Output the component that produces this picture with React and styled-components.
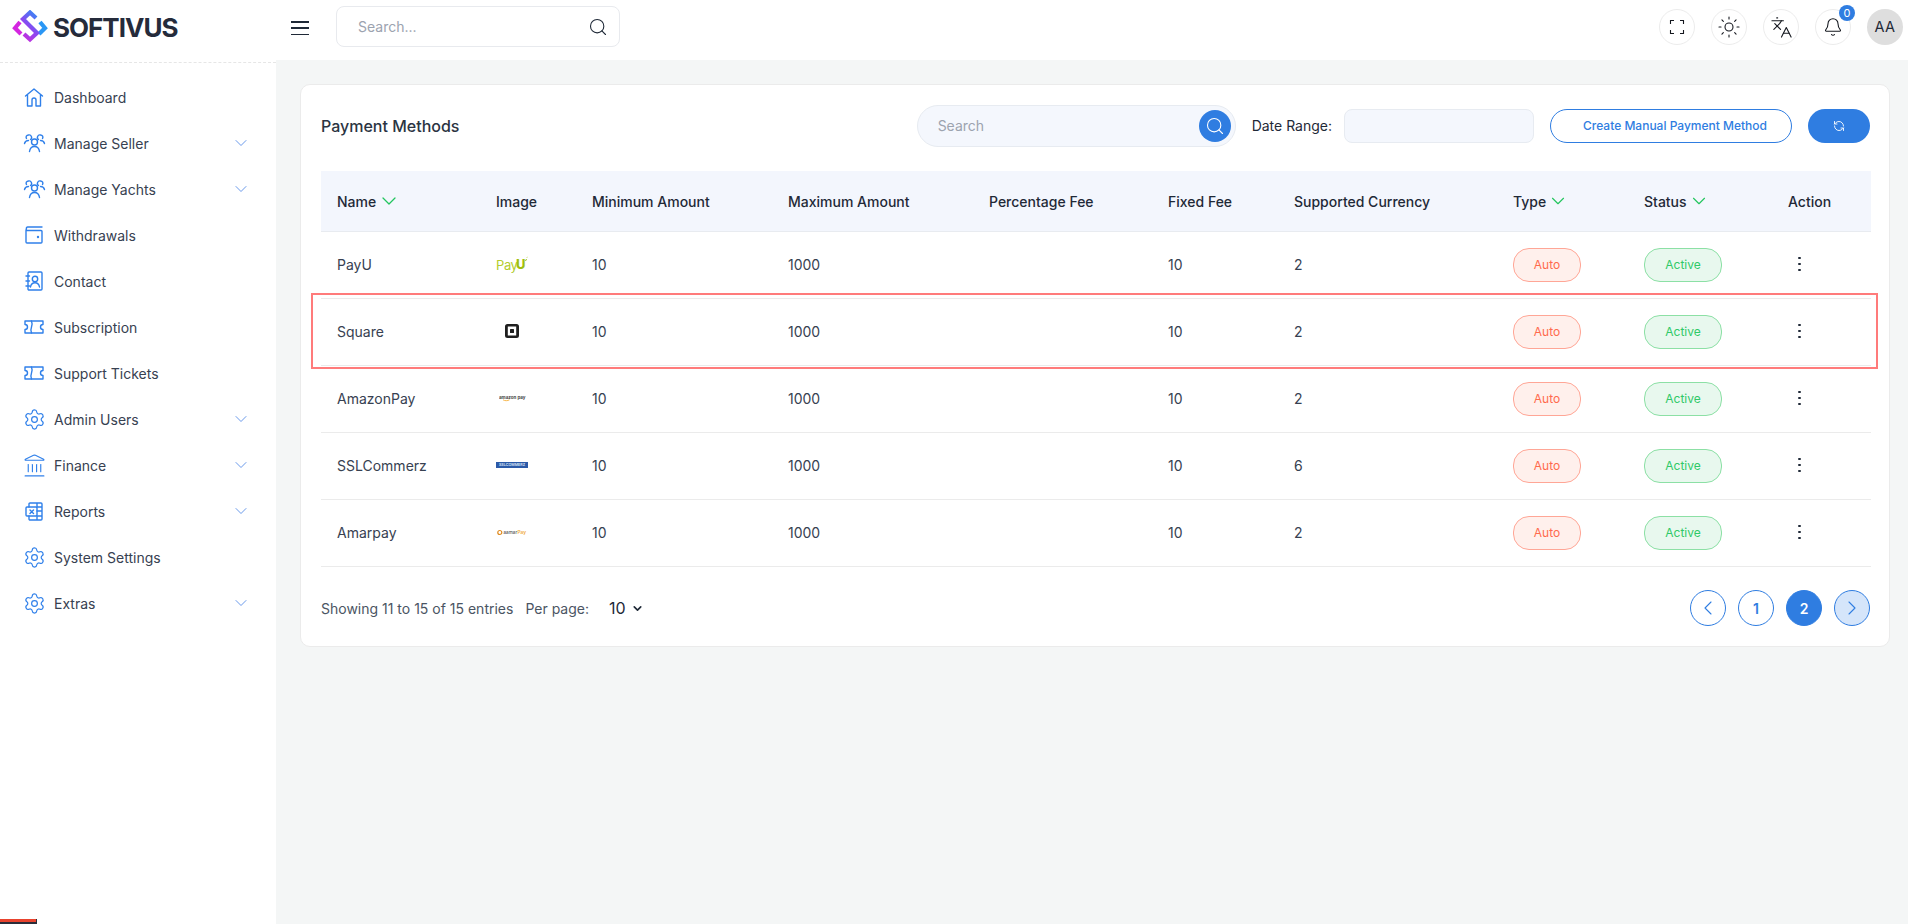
import React from "react";
import styled, { createGlobalStyle } from "styled-components";
import {
  ChevronDown, ChevronLeft, ChevronRight, Search, Settings, Landmark, Sun, Languages, Bell, RefreshCcw,
} from "lucide-react";

const Global = createGlobalStyle`
  html, body { margin: 0; padding: 0; height: 100%; overflow: hidden; }
  body { font-family: Inter, "Liberation Sans", sans-serif; background: #f4f6f6; color: #1f2937; }
  * { box-sizing: border-box; }
`;

const Shell = styled.div`
  display: flex;
  width: 1908px;
  height: 924px;
  position: relative;
`;

const Sidebar = styled.aside`
  width: 276px;
  flex: none;
  background: #fff;
`;

const Brand = styled.div`
  height: 63px;
  padding: 10px 0 0 12px;
  display: flex;
  align-items: flex-start;
  gap: 5px;
  border-bottom: 1px dashed #e6e6e6;
`;

const BrandName = styled.span`
  font-size: 26px;
  line-height: 36px;
  font-weight: 700;
  letter-spacing: -1px;
  color: #252b3b;
`;

const Nav = styled.nav`
  padding-top: 11px;
  display: flex;
  flex-direction: column;
`;

const NavItem = styled.div`
  height: 46px;
  padding: 0 25px 0 24px;
  display: flex;
  align-items: center;
  font-size: 14px;
  color: #374151;
`;

const NavIcon = styled.span`
  width: 20px;
  height: 20px;
  margin-right: 10px;
  display: flex;
  align-items: center;
  justify-content: center;
  color: #3080ea;
  svg { flex: none; }
`;

const NavLabel = styled.span`
  flex: 1;
`;

const NavCaret = styled(ChevronDown)`
  color: #5b8fe8;
`;

const Main = styled.div`
  flex: 1;
  min-width: 0;
  display: flex;
  flex-direction: column;
`;

const Topbar = styled.header`
  height: 60px;
  background: #fff;
  display: flex;
  align-items: center;
  padding: 0 5px 0 15px;
`;

const Burger = styled.button`
  width: 18px;
  height: 14px;
  padding: 0;
  border: 0;
  background: none;
  display: flex;
  flex-direction: column;
  justify-content: space-between;
  margin: -4px 27px 0 0;
  span {
    display: block;
    height: 1.5px;
    background: #1f2937;
  }
`;

const TopSearch = styled.div`
  width: 284px;
  height: 41px;
  margin-top: -7px;
  padding: 0 11px 0 21px;
  border: 1px solid #e8eaee;
  border-radius: 8px;
  display: flex;
  align-items: center;
  justify-content: space-between;
  font-size: 14px;
  color: #9ca3af;
  svg { color: #1f2937; }
`;

const TopActions = styled.div`
  margin-left: auto;
  display: flex;
  gap: 16px;
  margin-top: -6px;
`;

const RoundAction = styled.div`
  position: relative;
  width: 36px;
  height: 36px;
  border-radius: 50%;
  border: 1px solid #ececec;
  display: flex;
  align-items: center;
  justify-content: center;
  color: #15181f;
  svg { flex: none; }
`;

const Counter = styled.span`
  position: absolute;
  top: -5px;
  right: -5px;
  width: 16px;
  height: 16px;
  border-radius: 50%;
  background: #2f7de1;
  color: #fff;
  font-size: 11px;
  line-height: 16px;
  text-align: center;
`;

const Avatar = styled.div`
  width: 36px;
  height: 36px;
  border-radius: 50%;
  background: #dedede;
  font-size: 14.5px;
  letter-spacing: 0.5px;
  line-height: 36px;
  text-align: center;
  color: #1f2937;
`;

const Content = styled.main`
  padding: 24px 18px 0 24px;
`;

const Card = styled.section`
  height: 563px;
  background: #fff;
  border: 1px solid #ebebeb;
  border-radius: 10px;
  padding: 20px 19px 0 20px;
`;

const CardTop = styled.div`
  height: 42px;
  display: flex;
  align-items: center;
`;

const Title = styled.h1`
  margin: 0;
  font-size: 16px;
  font-weight: 500;
  color: #2b3442;
  margin-right: auto;
`;

const PillSearch = styled.div`
  width: 319px;
  height: 42px;
  padding: 0 4px 0 20px;
  border: 1px solid #e7ebf1;
  border-radius: 21px;
  background: #f4f7fd;
  display: flex;
  align-items: center;
  justify-content: space-between;
  font-size: 14px;
  color: #9ca3af;
`;

const PillHint = styled.span`
  margin-top: -2px;
`;

const PillButton = styled.span`
  width: 32px;
  height: 32px;
  border-radius: 50%;
  background: #2f7de1;
  color: #fff;
  display: flex;
  align-items: center;
  justify-content: center;
`;

const DateLabel = styled.span`
  margin: -2px 0 0 16px;
  font-size: 14px;
  color: #1f2937;
`;

const DateField = styled.div`
  width: 190px;
  height: 34px;
  margin-left: 12px;
  background: #f4f7fd;
  border: 1px solid #e7ebf1;
  border-radius: 8px;
`;

const OutlineButton = styled.button`
  width: 242px;
  height: 34px;
  margin-left: 16px;
  padding: 0 0 2px 8px;
  border: 1px solid #2f7de1;
  border-radius: 17px;
  background: #fff;
  color: #2f7de1;
  font: 500 12px Inter, sans-serif;
`;

const SolidButton = styled.button`
  width: 62px;
  height: 34px;
  margin-left: 16px;
  border: 0;
  border-radius: 17px;
  background: #2f7de1;
  color: #fff;
  display: flex;
  align-items: center;
  justify-content: center;
`;

const Table = styled.div`
  margin-top: 24px;
  width: 1550px;
`;

const columns = "159px 96px 196px 201px 179px 126px 219px 131px 144px 99px";

const HeadRow = styled.div`
  display: grid;
  grid-template-columns: ${columns};
  height: 61px;
  align-items: center;
  background: #f3f6fd;
  border-bottom: 1px solid #e8ebf0;
`;

const HeadCell = styled.div`
  padding-left: 16px;
  font-size: 14px;
  font-weight: 500;
  color: #1f2937;
  display: flex;
  align-items: center;
  svg { color: #22c55e; margin-left: 1px; }
`;

const BodyRow = styled.div`
  position: relative;
  display: grid;
  grid-template-columns: ${columns};
  height: 67px;
  align-items: center;
  border-bottom: 1px solid #ebebeb;
`;

const Cell = styled.div`
  padding: 0 0 2px 16px;
  font-size: 14px;
  color: #374151;
  display: flex;
  align-items: center;
`;

const BadgeCell = styled(Cell)`
  padding-bottom: 0;
`;

const Highlight = styled.div`
  position: absolute;
  left: -10px;
  right: -7px;
  top: -6px;
  bottom: -4px;
  border: 2px solid #ff7b7b;
  pointer-events: none;
`;

const LogoBox = styled.div`
  width: 32px;
  display: flex;
  align-items: center;
  justify-content: center;
`;

const Badge = styled.span`
  height: 34px;
  width: ${(p) => p.$w}px;
  border-radius: 16px;
  border: 1px solid ${(p) => p.$line};
  background: ${(p) => p.$bg};
  color: ${(p) => p.$fg};
  font-size: 12px;
  line-height: 32px;
  text-align: center;
`;

const Dots = styled.span`
  margin-left: 10px;
  display: flex;
  flex-direction: column;
  gap: 3.5px;
  i {
    display: block;
    width: 2.5px;
    height: 2.5px;
    border-radius: 50%;
    background: #1f2937;
  }
`;

const Footer = styled.div`
  height: 82px;
  display: flex;
  align-items: center;
  font-size: 14px;
  color: #4b5563;
`;

const PerPage = styled.span`
  margin-left: 12px;
`;

const PerValue = styled.span`
  margin-left: 20px;
  font-size: 16px;
  color: #1f2937;
  display: flex;
  align-items: center;
  gap: 5px;
`;

const Pager = styled.div`
  margin-left: auto;
  display: flex;
  gap: 12px;
`;

const PageButton = styled.button`
  width: 36px;
  height: 36px;
  padding: 0;
  border-radius: 50%;
  border: 1px solid #2f7de1;
  background: ${(p) => (p.$on ? "#2f7de1" : p.$soft ? "#d5e5fa" : "#fff")};
  color: ${(p) => (p.$on ? "#fff" : "#2f7de1")};
  font: 600 14px Inter, sans-serif;
  display: flex;
  align-items: center;
  justify-content: center;
`;

const Corner = styled.div`
  position: absolute;
  left: 0;
  bottom: 0;
  width: 37px;
  height: 5px;
  background: #2a2d3a;
  &::before {
    content: "";
    position: absolute;
    left: 0;
    top: 0;
    width: 36px;
    height: 3px;
    background: #e8432e;
  }
`;

const sw = { fill: "none", stroke: "currentColor", strokeWidth: 1.4, strokeLinecap: "round", strokeLinejoin: "round" };

const Home = () => (
  <svg width="20" height="21" viewBox="0 0 20 21" {...sw}>
    <path d="M1.500 9 10 2l8.500 7M3.500 7.500V19h4.500v-6a2 2 0 0 1 4 0v6h4.500V7.500" />
  </svg>
);
const People = () => (
  <svg width="23" height="20" viewBox="0 0 22 20" {...sw}>
    <circle cx="11" cy="9" r="3" />
    <path d="M6 18.500c.5-3.500 2.500-5 5-5s4.500 1.500 5 5M5 2a2.500 2.500 0 0 1 2 4.500M5 2C3 2 2 4 3 5.500M1 10.500c.5-2 2-3 4-3M17 2a2.500 2.500 0 0 0-2 4.500M17 2c2 0 3 2 2 3.500M21 10.500c-.5-2-2-3-4-3" />
  </svg>
);
const Wallet = () => (
  <svg width="18" height="18" viewBox="0 0 18 18" {...sw}>
    <path d="M1 4.500V16a1 1 0 0 0 1 1h14a1 1 0 0 0 1-1V5.500a1 1 0 0 0-1-1H1ZM1 4.500 1.500 2a1 1 0 0 1 1-1H17" />
    <circle cx="13" cy="11" r=".5" />
  </svg>
);
const Contact = () => (
  <svg width="18" height="20" viewBox="0 0 18 20" {...sw}>
    <rect x="3" y="1" width="14" height="18" rx="1" />
    <circle cx="10" cy="8" r="2.700" />
    <path d="M5.500 16c.5-3 2.200-4.200 4.500-4.200s4 1.200 4.500 4.200M1 5h3.500M1 10h3.500M1 15h3.500" />
  </svg>
);
const Ticket = () => (
  <svg width="20" height="14" viewBox="0 0 20 14" {...sw}>
    <path d="M1 1h18v3.500a2.500 2.500 0 0 0 0 5V13H1V9.500a2.500 2.500 0 0 0 0-5Z" />
    <path d="M7.500 1c.8 2 .8 4 0 6s-.8 4 0 6" />
  </svg>
);
const Sheet = () => (
  <svg width="18" height="19" viewBox="0 0 18 19" {...sw}>
    <rect x="1" y="5" width="11" height="9" rx="1" />
    <path d="M4 5V2a1 1 0 0 1 1-1h11a1 1 0 0 1 1 1v15a1 1 0 0 1-1 1H5a1 1 0 0 1-1-1v-3M12 1v4M12 5h5M12 9h5M12 14h5M12 14v4M5 8l3.500 3.500M8.500 8 5 11.500" />
  </svg>
);
const Expand = () => (
  <svg width="16" height="16" viewBox="0 0 16 16" fill="none" stroke="currentColor" strokeWidth="1.100">
    <path d="M1.500 5V1.500H5M11 1.500h3.500V5M14.500 11v3.500H11M5 14.500H1.500V11" />
  </svg>
);

const Logo = () => (
  <svg width="36" height="36" viewBox="0 0 36 36" fill="none" strokeWidth="4.200" strokeLinejoin="miter">
    <defs>
      <linearGradient id="lgS" gradientUnits="userSpaceOnUse" x1="4" y1="32" x2="32" y2="4">
        <stop offset="0" stopColor="#ee1fd0" />
        <stop offset=".5" stopColor="#8b47f0" />
        <stop offset="1" stopColor="#1e9bf6" />
      </linearGradient>
    </defs>
    <path d="M8 12 3 18l6 6" stroke="#d426e0" />
    <path d="M28 12l5 6-6 6" stroke="#2a97f5" />
    <path d="M24 8l-6-5.500L11 9l14 14-7 6.500-6-5.500" stroke="url(#lgS)" />
  </svg>
);

const PayULogo = () => (
  <svg width="32" height="17" viewBox="0 0 32 17">
    <text x="0" y="14" fontFamily="Inter, sans-serif" fontSize="13" fontWeight="400" letterSpacing="-.4" fill="#b2cc2e">Pay</text>
    <text x="20" y="13" fontFamily="Inter, sans-serif" fontSize="13" fontWeight="800" fill="#9fbf10">U</text>
    <path d="M29.500 5 30.500 3M31 1.500l.3-.6" stroke="#9fbf10" strokeWidth="1" />
  </svg>
);
const SquareLogo = () => (
  <svg width="14" height="14" viewBox="0 0 14 14">
    <path fillRule="evenodd" d="M2.500 0h9A2.500 2.500 0 0 1 14 2.500v9a2.500 2.500 0 0 1-2.500 2.500h-9A2.500 2.500 0 0 1 0 11.500v-9A2.500 2.500 0 0 1 2.500 0Zm.3 2.500v9h8.400v-9Z" fill="#1f1f1f" />
    <rect x="5" y="5" width="4" height="4" rx=".5" fill="#1f1f1f" />
  </svg>
);
const AmazonLogo = () => (
  <svg width="27" height="8" viewBox="0 0 27 8">
    <text x="0" y="4.500" fontFamily="Inter, sans-serif" fontSize="4.500" fontWeight="700" fill="#444">amazon pay</text>
    <path d="M4 5.800c2 1.200 4.500 1.200 6.500 0" stroke="#f5a623" strokeWidth=".8" fill="none" />
  </svg>
);
const SslLogo = () => (
  <svg width="32" height="6" viewBox="0 0 32 6">
    <rect width="32" height="6" fill="#2c5aa8" />
    <text x="16" y="4.200" textAnchor="middle" fontFamily="Inter, sans-serif" fontSize="3.700" fontWeight="600" fill="#dbe6f7">SSLCOMMERZ</text>
  </svg>
);
const AmarLogo = () => (
  <svg width="31" height="7" viewBox="0 0 31 7">
    <circle cx="2.800" cy="3.500" r="2" fill="none" stroke="#e08a1e" strokeWidth="1.200" />
    <text x="6.500" y="5.200" fontFamily="Inter, sans-serif" fontSize="4.600" fontWeight="500" fill="#555">aamar</text>
    <text x="20.500" y="5.200" fontFamily="Inter, sans-serif" fontSize="4.800" fontWeight="600" fill="#f0a93a">Pay</text>
  </svg>
);

const gear = <Settings size={23} strokeWidth={1.25} />;
const people = <People />;
const ticket = <Ticket />;

const menu = [
  ["Dashboard", <Home />, false],
  ["Manage Seller", people, true],
  ["Manage Yachts", people, true],
  ["Withdrawals", <Wallet />, false],
  ["Contact", <Contact />, false],
  ["Subscription", ticket, false],
  ["Support Tickets", ticket, false],
  ["Admin Users", gear, true],
  ["Finance", <Landmark size={25} strokeWidth={1.1} />, true],
  ["Reports", <Sheet />, true],
  ["System Settings", gear, false],
  ["Extras", gear, true],
];

const heads = [
  ["Name", 24], ["Image"], ["Minimum Amount"], ["Maximum Amount"], ["Percentage Fee"],
  ["Fixed Fee"], ["Supported Currency"], ["Type", 22], ["Status", 22], ["Action"],
];

const rows = [
  ["PayU", <PayULogo />, "2"],
  ["Square", <SquareLogo />, "2"],
  ["AmazonPay", <AmazonLogo />, "2"],
  ["SSLCommerz", <SslLogo />, "6"],
  ["Amarpay", <AmarLogo />, "2"],
];

export default function App() {
  return (
    <Shell>
      <Global />
      <Sidebar>
        <Brand>
          <Logo />
          <BrandName>SOFTIVUS</BrandName>
        </Brand>
        <Nav>
          {menu.map(([label, icon, caret]) => (
            <NavItem key={label}>
              <NavIcon>{icon}</NavIcon>
              <NavLabel>{label}</NavLabel>
              {caret && <NavCaret size={20} strokeWidth={1.1} />}
            </NavItem>
          ))}
        </Nav>
      </Sidebar>
      <Main>
        <Topbar>
          <Burger aria-label="menu"><span /><span /><span /></Burger>
          <TopSearch>
            <span>Search...</span>
            <Search size={20} strokeWidth={1.3} />
          </TopSearch>
          <TopActions>
            <RoundAction><Expand /></RoundAction>
            <RoundAction><Sun size={24} strokeWidth={1.1} /></RoundAction>
            <RoundAction><Languages size={23} strokeWidth={1.15} /></RoundAction>
            <RoundAction><Bell size={20} strokeWidth={1.3} /><Counter>0</Counter></RoundAction>
            <Avatar>AA</Avatar>
          </TopActions>
        </Topbar>
        <Content>
          <Card>
            <CardTop>
              <Title>Payment Methods</Title>
              <PillSearch>
                <PillHint>Search</PillHint>
                <PillButton><Search size={20} strokeWidth={1.3} /></PillButton>
              </PillSearch>
              <DateLabel>Date Range:</DateLabel>
              <DateField />
              <OutlineButton>Create Manual Payment Method</OutlineButton>
              <SolidButton><RefreshCcw size={12} strokeWidth={1.8} /></SolidButton>
            </CardTop>
            <Table>
              <HeadRow>
                {heads.map(([label, caret]) => (
                  <HeadCell key={label}>
                    {label}
                    {caret && <ChevronDown size={caret} strokeWidth={1.25} />}
                  </HeadCell>
                ))}
              </HeadRow>
              {rows.map(([name, logo, cur], i) => (
                <BodyRow key={name}>
                  <Cell>{name}</Cell>
                  <Cell><LogoBox>{logo}</LogoBox></Cell>
                  <Cell>10</Cell>
                  <Cell>1000</Cell>
                  <Cell />
                  <Cell>10</Cell>
                  <Cell>{cur}</Cell>
                  <BadgeCell><Badge $w={68} $line="#ffa696" $bg="#fff0ec" $fg="#ff6a4d">Auto</Badge></BadgeCell>
                  <BadgeCell><Badge $w={78} $line="#8ce0a5" $bg="#e8f8ee" $fg="#2fc968">Active</Badge></BadgeCell>
                  <Cell><Dots><i /><i /><i /></Dots></Cell>
                  {i === 1 && <Highlight />}
                </BodyRow>
              ))}
            </Table>
            <Footer>
              <span>Showing 11 to 15 of 15 entries</span>
              <PerPage>Per page:</PerPage>
              <PerValue>10 <ChevronDown size={13} strokeWidth={3} /></PerValue>
              <Pager>
                <PageButton><ChevronLeft size={24} strokeWidth={1.1} /></PageButton>
                <PageButton>1</PageButton>
                <PageButton $on>2</PageButton>
                <PageButton $soft><ChevronRight size={24} strokeWidth={1.1} /></PageButton>
              </Pager>
            </Footer>
          </Card>
        </Content>
      </Main>
      <Corner />
    </Shell>
  );
}
